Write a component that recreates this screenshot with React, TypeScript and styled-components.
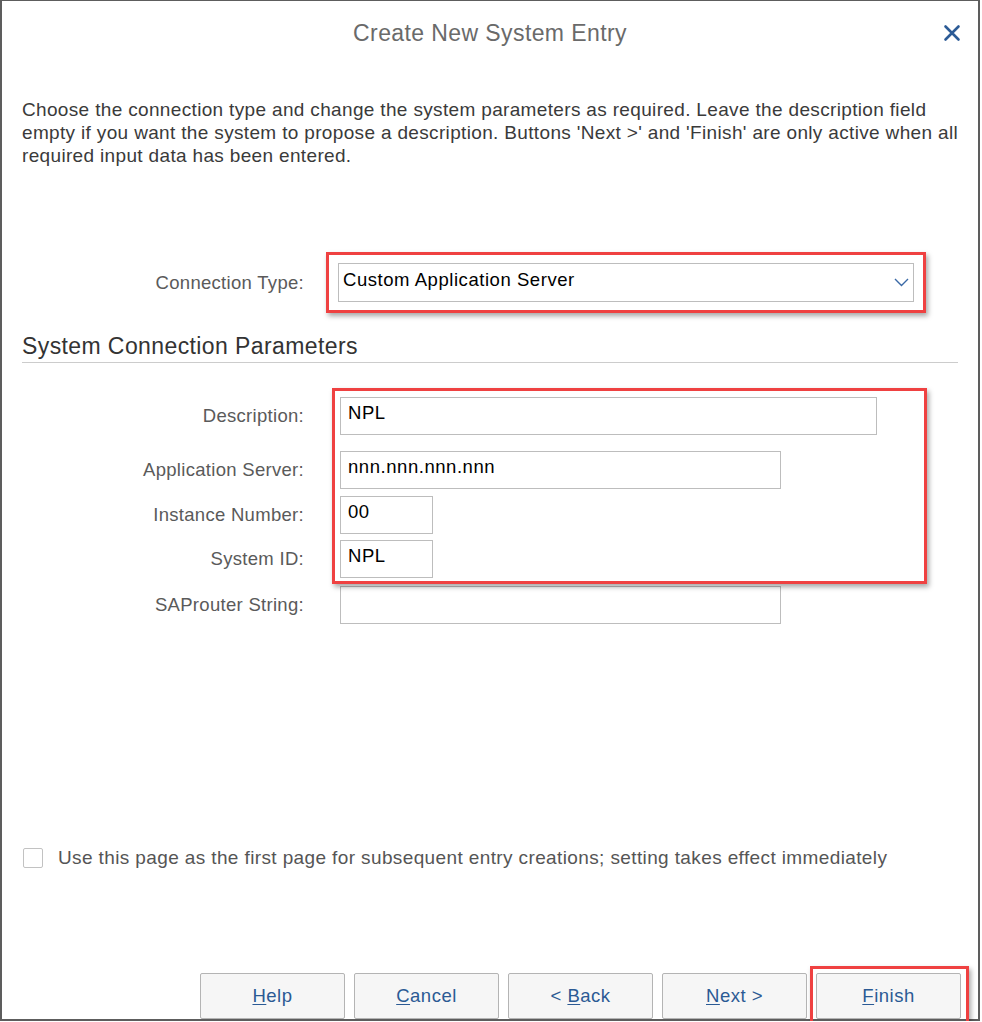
import styled, { createGlobalStyle } from "styled-components";

const GlobalStyle = createGlobalStyle`
  html, body {
    margin: 0;
    padding: 0;
    background: #ffffff;
    overflow: hidden;
  }
  body {
    font-family: "Liberation Sans", Arial, sans-serif;
  }
`;

const fields = [
  { label: "Description:", value: "NPL", width: 537 },
  { label: "Application Server:", value: "nnn.nnn.nnn.nnn", width: 441 },
  { label: "Instance Number:", value: "00", width: 93 },
  { label: "System ID:", value: "NPL", width: 93 },
  { label: "SAProuter String:", value: "", width: 441 },
];

const buttons = [
  { key: "H", rest: "elp" },
  { key: "C", rest: "ancel" },
  { pre: "< ", key: "B", rest: "ack" },
  { key: "N", rest: "ext >" },
  { key: "F", rest: "inish", marked: true },
];

const App = () => {
  return (
    <>
      <GlobalStyle />
      <Frame>
        <Header>
          <span />
          <Title>Create New System Entry</Title>
          <Close aria-label="Close">
            <svg width="18" height="18" viewBox="0 0 18 18">
              <path
                d="M2.5 2.5 L15.5 15.5 M15.5 2.5 L2.5 15.5"
                stroke="#2c5b96"
                strokeWidth="2.6"
                strokeLinecap="round"
              />
            </svg>
          </Close>
        </Header>

        <Intro>
          Choose the connection type and change the system parameters as
          required. Leave the description field empty if you want the system to
          propose a description. Buttons 'Next &gt;' and 'Finish' are only
          active when all required input data has been entered.
        </Intro>

        <ConnRow>
          <Label>Connection Type:</Label>
          <Highlight>
            <Select>
              <SelectText>Custom Application Server</SelectText>
              <svg width="15" height="9" viewBox="0 0 15 9">
                <polyline
                  points="1,1 7.5,7.5 14,1"
                  fill="none"
                  stroke="#3a69a6"
                  strokeWidth="1.4"
                />
              </svg>
            </Select>
          </Highlight>
        </ConnRow>

        <SectionTitle>System Connection Parameters</SectionTitle>

        <FieldGrid>
          {fields.map((f, i) => (
            <Row key={f.label} $row={i + 1}>
              <Label>{f.label}</Label>
              <Input readOnly defaultValue={f.value} $width={f.width} />
            </Row>
          ))}
          <GroupMark />
        </FieldGrid>

        <CheckRow>
          <Box />
          <CheckText>
            Use this page as the first page for subsequent entry creations;
            setting takes effect immediately
          </CheckText>
        </CheckRow>

        <Footer>
          {buttons.map((b) => (
            <ButtonWrap key={b.key}>
              <Button>
                {b.pre}
                <u>{b.key}</u>
                {b.rest}
              </Button>
              {b.marked && <ButtonMark />}
            </ButtonWrap>
          ))}
        </Footer>
      </Frame>
    </>
  );
};

export default App;

const Frame = styled.div`
  width: 980px;
  height: 1021px;
  box-sizing: border-box;
  border-style: solid;
  border-color: #5d5d5d;
  border-width: 1px 2px 2px 2px;
  background: #ffffff;
  display: flex;
  flex-direction: column;
`;

const Header = styled.div`
  height: 64px;
  display: grid;
  grid-template-columns: 1fr auto 1fr;
  align-items: center;
`;

const Title = styled.div`
  font-size: 23px;
  letter-spacing: 0.4px;
  color: #6a6a6a;
  line-height: 26px;
`;

const Close = styled.div`
  justify-self: end;
  margin-right: 17px;
  width: 18px;
  height: 18px;
  display: flex;
`;

const Intro = styled.p`
  margin: 33px 14px 0 20px;
  font-size: 19px;
  letter-spacing: 0.34px;
  line-height: 23px;
  color: #3a3a3a;
`;

const Label = styled.div`
  height: 38px;
  display: flex;
  align-items: center;
  justify-content: flex-end;
  font-size: 18.5px;
  letter-spacing: 0.3px;
  color: #5a5a5a;
  white-space: nowrap;
`;

const ConnRow = styled.div`
  margin: 96px 20px 0 20px;
  display: grid;
  grid-template-columns: 282px 1fr;
  column-gap: 34px;
  align-items: center;
`;

const Highlight = styled.div`
  justify-self: start;
  margin: -11px 0 -11px -12px;
  padding: 8px 9px;
  border: 3px solid #ef4141;
  box-shadow: 2px 3px 5px rgba(0, 0, 0, 0.35);
`;

const Select = styled.div`
  width: 576px;
  height: 39px;
  box-sizing: border-box;
  border: 1px solid #bdbdbd;
  background: #ffffff;
  display: flex;
  justify-content: space-between;
  align-items: center;
  padding: 0 4px 0 4px;
`;

const SelectText = styled.span`
  align-self: flex-start;
  padding-top: 4px;
  font-size: 18.5px;
  letter-spacing: 0.55px;
  line-height: 23px;
  color: #000000;
`;

const SectionTitle = styled.div`
  margin: 31px 20px 0 20px;
  padding-bottom: 3px;
  border-bottom: 1px solid #cccccc;
  font-size: 23px;
  letter-spacing: 0.4px;
  line-height: 26px;
  color: #333333;
`;

const FieldGrid = styled.div`
  margin: 34px 20px 0 20px;
  display: grid;
  grid-template-columns: 282px 1fr;
  grid-template-rows: 54px 45px 44px 46px 38px;
  column-gap: 36px;
`;

const Row = styled.div<{ $row: number }>`
  display: contents;

  & > * {
    grid-row: ${(p) => p.$row};
    align-self: start;
  }
  & > :first-child {
    grid-column: 1;
  }
  & > :last-child {
    grid-column: 2;
    justify-self: start;
  }
`;

const Input = styled.input<{ $width: number }>`
  width: ${(p) => p.$width}px;
  height: 38px;
  box-sizing: border-box;
  border: 1px solid #bdbdbd;
  border-radius: 0;
  outline: none;
  margin: 0;
  padding: 0 7px 6px 7px;
  font-family: "Liberation Sans", Arial, sans-serif;
  font-size: 18.5px;
  letter-spacing: 0.55px;
  color: #000000;
  background: #ffffff;
`;

const GroupMark = styled.div`
  grid-column: 2;
  grid-row: 1 / 5;
  justify-self: start;
  width: 595px;
  margin: -9px 0 2px -8px;
  box-sizing: border-box;
  border: 3px solid #ef4141;
  box-shadow: 2px 3px 5px rgba(0, 0, 0, 0.35);
  pointer-events: none;
`;

const CheckRow = styled.div`
  margin: auto 20px 104px 21px;
  display: flex;
  align-items: center;
  gap: 15px;
`;

const Box = styled.div`
  width: 20px;
  height: 20px;
  box-sizing: border-box;
  border: 1px solid #c2c2c2;
  border-radius: 2px;
  background: #ffffff;
`;

const CheckText = styled.span`
  font-size: 19px;
  letter-spacing: 0.38px;
  line-height: 23px;
  color: #555555;
`;

const Footer = styled.div`
  display: flex;
  justify-content: flex-end;
  gap: 9px;
  padding-right: 17px;
`;

const ButtonWrap = styled.div`
  position: relative;
`;

const Button = styled.button`
  width: 145px;
  height: 46px;
  box-sizing: border-box;
  border: 1px solid #b4b4b4;
  border-radius: 2px;
  background: #f6f6f6;
  font-family: "Liberation Sans", Arial, sans-serif;
  font-size: 18.5px;
  letter-spacing: 0.5px;
  color: #2b5a94;
  padding: 0;

  u {
    text-underline-offset: 2px;
  }
`;

const ButtonMark = styled.div`
  position: absolute;
  top: -7px;
  left: -6px;
  right: -8px;
  bottom: -8px;
  border: 3px solid #ef4141;
  box-shadow: 2px 3px 5px rgba(0, 0, 0, 0.35);
  pointer-events: none;
`;
